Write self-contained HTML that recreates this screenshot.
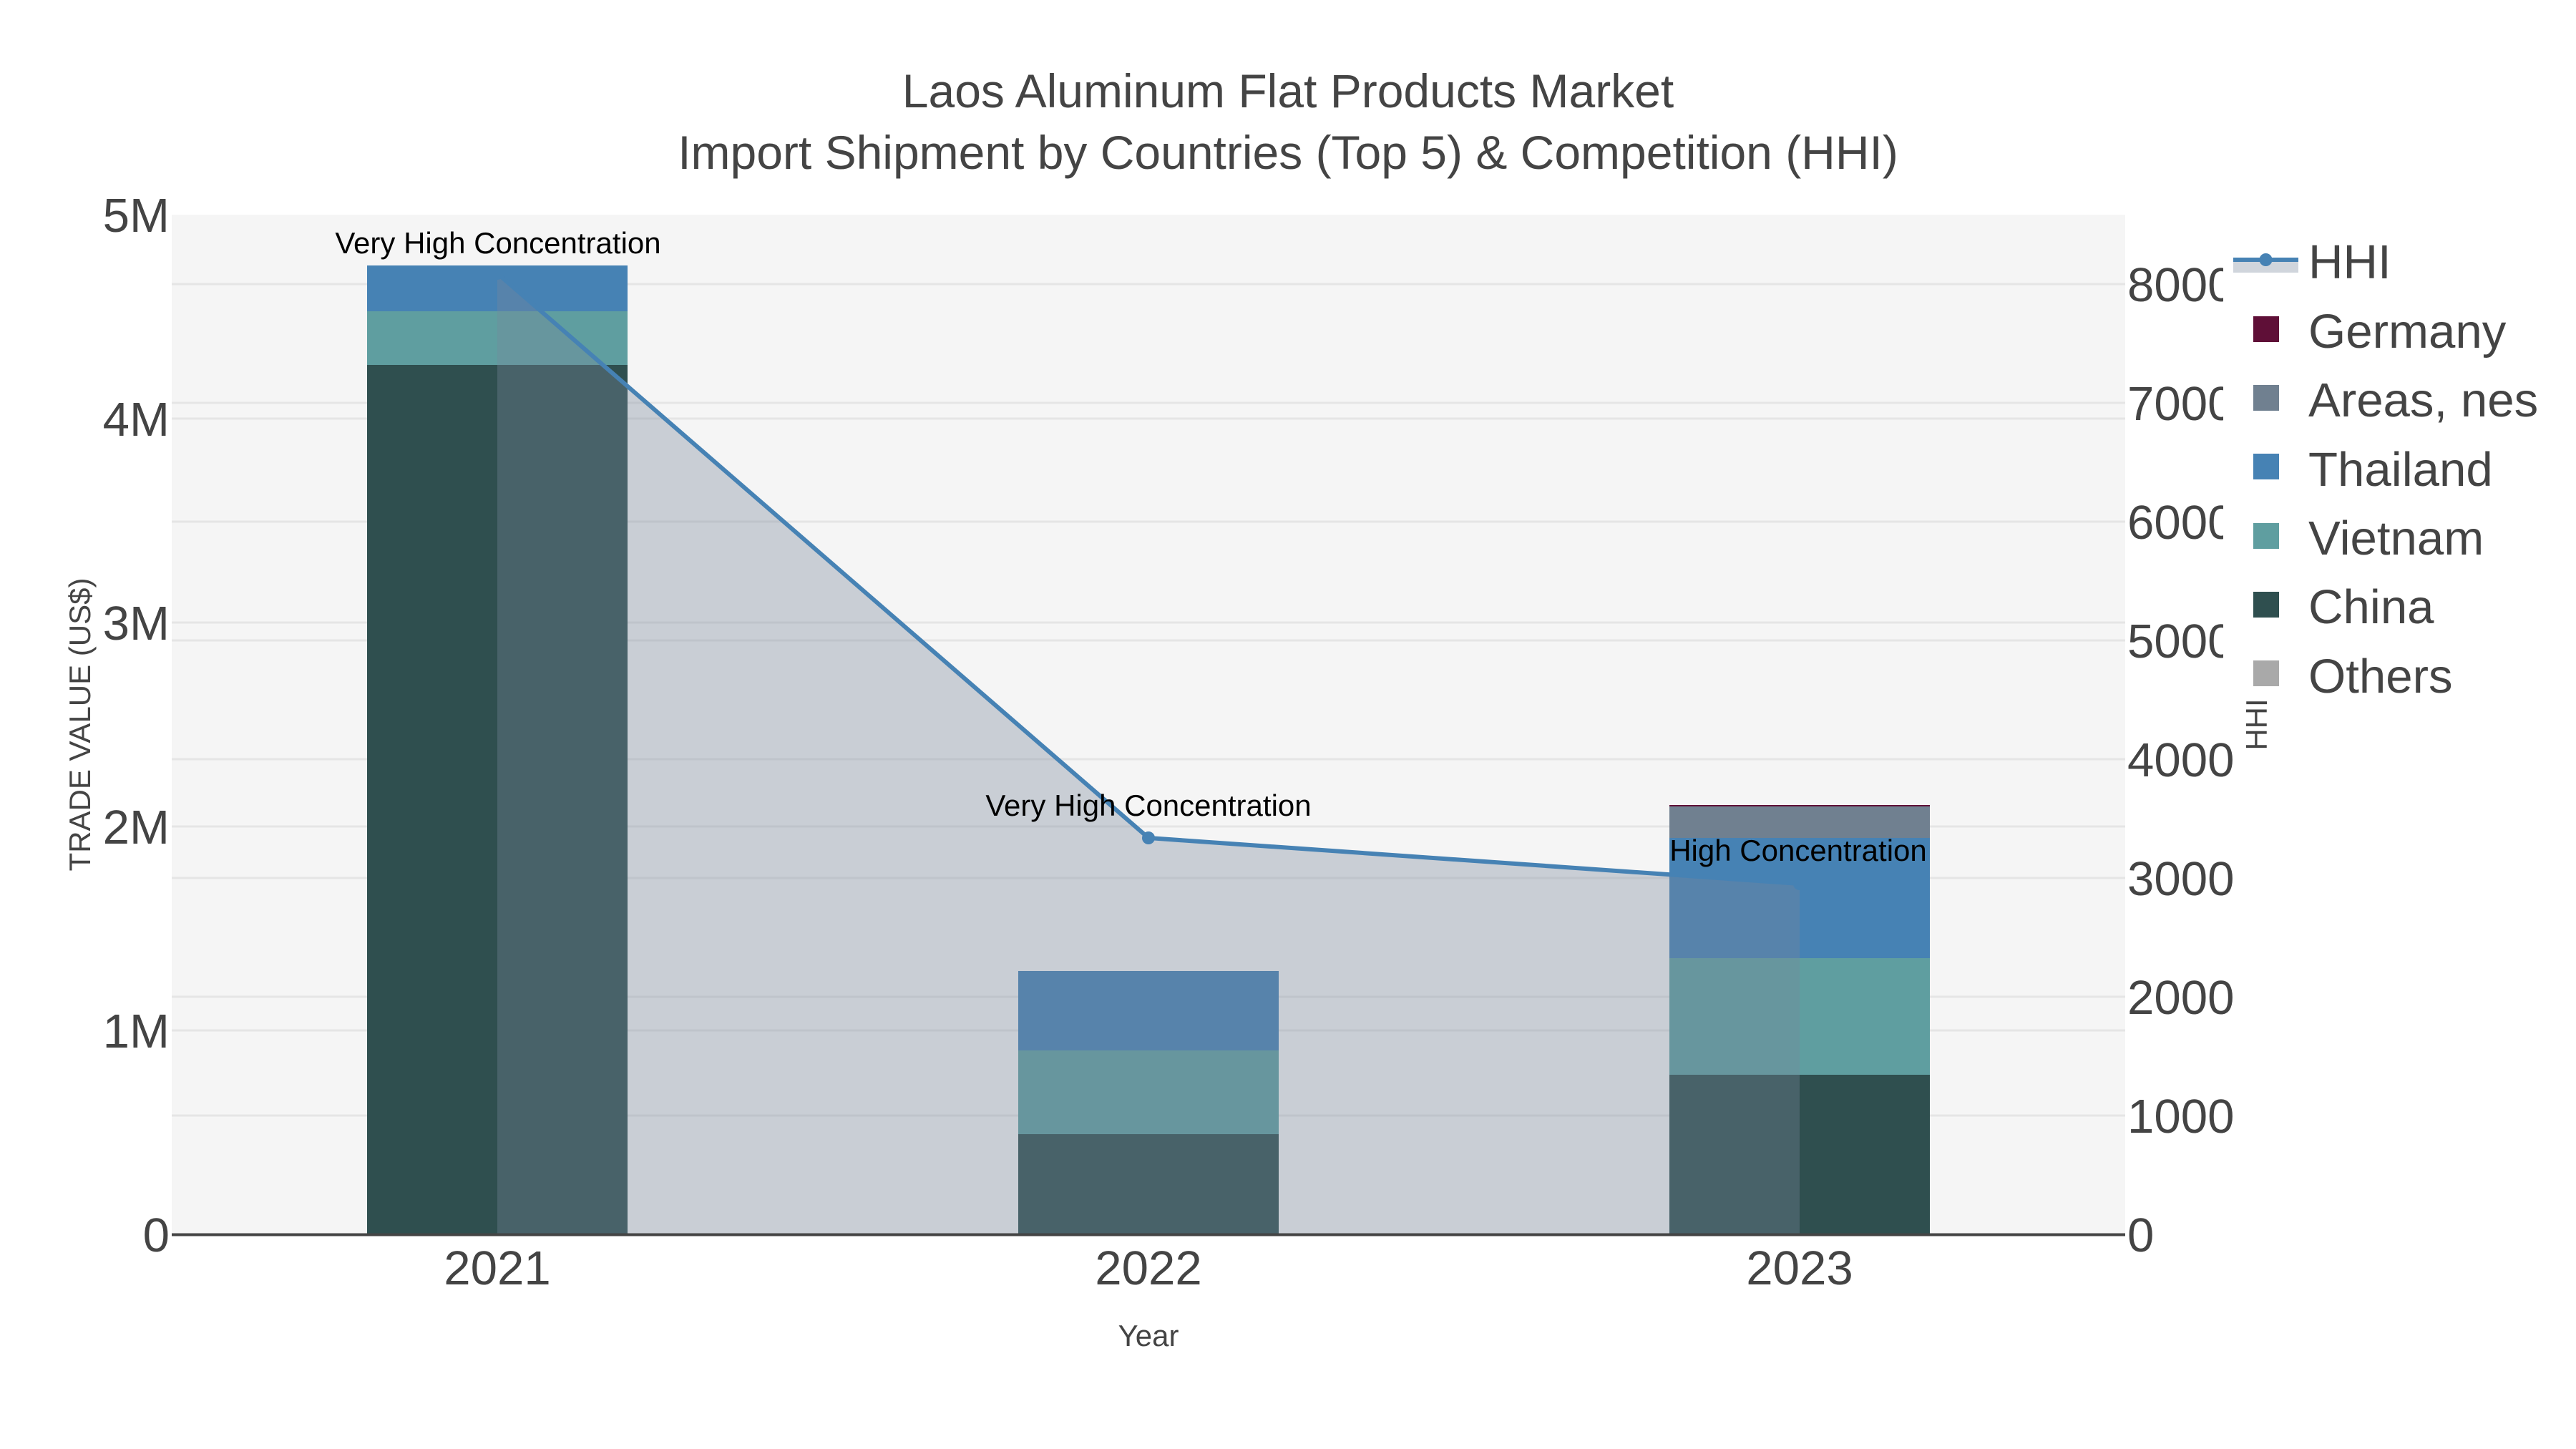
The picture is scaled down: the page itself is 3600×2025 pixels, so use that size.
<!DOCTYPE html>
<html><head><meta charset="utf-8"><title>Laos Aluminum Flat Products Market</title>
<style>
html,body{margin:0;padding:0;background:#fff;width:3600px;height:2025px;overflow:hidden}
svg{display:block}
text{font-family:"Liberation Sans",sans-serif;fill:#444}
.t{font-size:66px}
.k{font-size:67.2px}
.s{font-size:42px}
.a{font-size:42px;fill:#000;text-anchor:middle}
.m{text-anchor:middle}
.e{text-anchor:end}
.g line{stroke:#e5e5e5;stroke-width:3}
</style></head><body>
<svg xmlns="http://www.w3.org/2000/svg" width="3600" height="2025" viewBox="0 0 3600 2025">
<rect width="3600" height="2025" fill="#fff"/>
<rect x="240" y="300" width="2730" height="1425" fill="#f5f5f5"/>
<g class="g">
<line x1="240" x2="2970" y1="585" y2="585"/><line x1="240" x2="2970" y1="870" y2="870"/><line x1="240" x2="2970" y1="1155" y2="1155"/><line x1="240" x2="2970" y1="1440" y2="1440"/>
<line x1="240" x2="2970" y1="397" y2="397"/><line x1="240" x2="2970" y1="563" y2="563"/><line x1="240" x2="2970" y1="729" y2="729"/><line x1="240" x2="2970" y1="895" y2="895"/><line x1="240" x2="2970" y1="1061" y2="1061"/><line x1="240" x2="2970" y1="1227" y2="1227"/><line x1="240" x2="2970" y1="1393" y2="1393"/><line x1="240" x2="2970" y1="1559" y2="1559"/>
</g>
<!-- bars -->
<rect x="513" y="510" width="364" height="1214" fill="#2f4f4f"/>
<rect x="513" y="435" width="364" height="75" fill="#5f9ea0"/>
<rect x="513" y="371" width="364" height="64" fill="#4682b4"/>
<rect x="1423" y="1585" width="364" height="139" fill="#2f4f4f"/>
<rect x="1423" y="1468" width="364" height="117" fill="#5f9ea0"/>
<rect x="1423" y="1357" width="364" height="111" fill="#4682b4"/>
<rect x="2333" y="1502" width="364" height="222" fill="#2f4f4f"/>
<rect x="2333" y="1339" width="364" height="163" fill="#5f9ea0"/>
<rect x="2333" y="1171" width="364" height="168" fill="#4682b4"/>
<rect x="2333" y="1127" width="364" height="44" fill="#708090"/>
<rect x="2333" y="1125" width="364" height="2" fill="#5f0f37"/>
<!-- HHI -->
<polygon points="695,382 1605,1171 2515,1235 2515,1724 695,1724" fill="rgb(120,134,156)" fill-opacity="0.35"/>
<polyline points="695,382 1605,1171 2515,1235" fill="none" stroke="#4682b4" stroke-width="6"/>
<circle cx="695" cy="382" r="9" fill="#4682b4"/><circle cx="1605" cy="1171" r="9" fill="#4682b4"/><circle cx="2515" cy="1235" r="9" fill="#4682b4"/>
<line x1="240" x2="2970" y1="1725.5" y2="1725.5" stroke="#444" stroke-width="4"/>
<!-- annotations -->
<text class="a" x="696" y="354">Very High Concentration</text>
<text class="a" x="1605" y="1140">Very High Concentration</text>
<text class="a" x="2513" y="1203">High Concentration</text>
<!-- title -->
<text class="t m" x="1800" y="150">Laos Aluminum Flat Products Market</text>
<text class="t m" x="1800" y="236">Import Shipment by Countries (Top 5) &amp; Competition (HHI)</text>
<!-- left ticks -->
<text class="k e" x="237" y="324">5M</text>
<text class="k e" x="237" y="609">4M</text>
<text class="k e" x="237" y="894">3M</text>
<text class="k e" x="237" y="1179">2M</text>
<text class="k e" x="237" y="1464">1M</text>
<text class="k e" x="237" y="1749">0</text>
<!-- right ticks -->
<text class="k" x="2973" y="421">8000</text>
<text class="k" x="2973" y="587">7000</text>
<text class="k" x="2973" y="753">6000</text>
<text class="k" x="2973" y="919">5000</text>
<text class="k" x="2973" y="1085">4000</text>
<text class="k" x="2973" y="1251">3000</text>
<text class="k" x="2973" y="1417">2000</text>
<text class="k" x="2973" y="1583">1000</text>
<text class="k" x="2973" y="1749">0</text>
<!-- x ticks -->
<text class="k m" x="695" y="1795">2021</text>
<text class="k m" x="1605" y="1795">2022</text>
<text class="k m" x="2515" y="1795">2023</text>
<!-- axis titles -->
<text class="s m" x="1605" y="1881">Year</text>
<text class="s m" transform="translate(126,1012.5) rotate(-90)">TRADE VALUE (US$)</text>
<!-- legend -->
<rect x="3107" y="320" width="493" height="680" fill="#fff"/>
<text class="s m" transform="translate(3168,1012.5) rotate(-90)">HHI</text>
<rect x="3121" y="363" width="91" height="18" fill="rgb(120,134,156)" fill-opacity="0.35"/>
<line x1="3121" x2="3212" y1="363" y2="363" stroke="#4682b4" stroke-width="6"/>
<circle cx="3166.5" cy="363" r="9" fill="#4682b4"/>
<rect x="3149" y="442" width="36" height="36" fill="#5f0f37"/>
<rect x="3149" y="538" width="36" height="36" fill="#708090"/>
<rect x="3149" y="634" width="36" height="36" fill="#4682b4"/>
<rect x="3149" y="731" width="36" height="36" fill="#5f9ea0"/>
<rect x="3149" y="827" width="36" height="36" fill="#2f4f4f"/>
<rect x="3149" y="923" width="36" height="36" fill="#a9a9a9"/>
<text class="k" x="3226" y="389">HHI</text>
<text class="k" x="3226" y="486">Germany</text>
<text class="k" x="3226" y="582">Areas, nes</text>
<text class="k" x="3226" y="679">Thailand</text>
<text class="k" x="3226" y="775">Vietnam</text>
<text class="k" x="3226" y="871">China</text>
<text class="k" x="3226" y="968">Others</text>
</svg>
</body></html>
